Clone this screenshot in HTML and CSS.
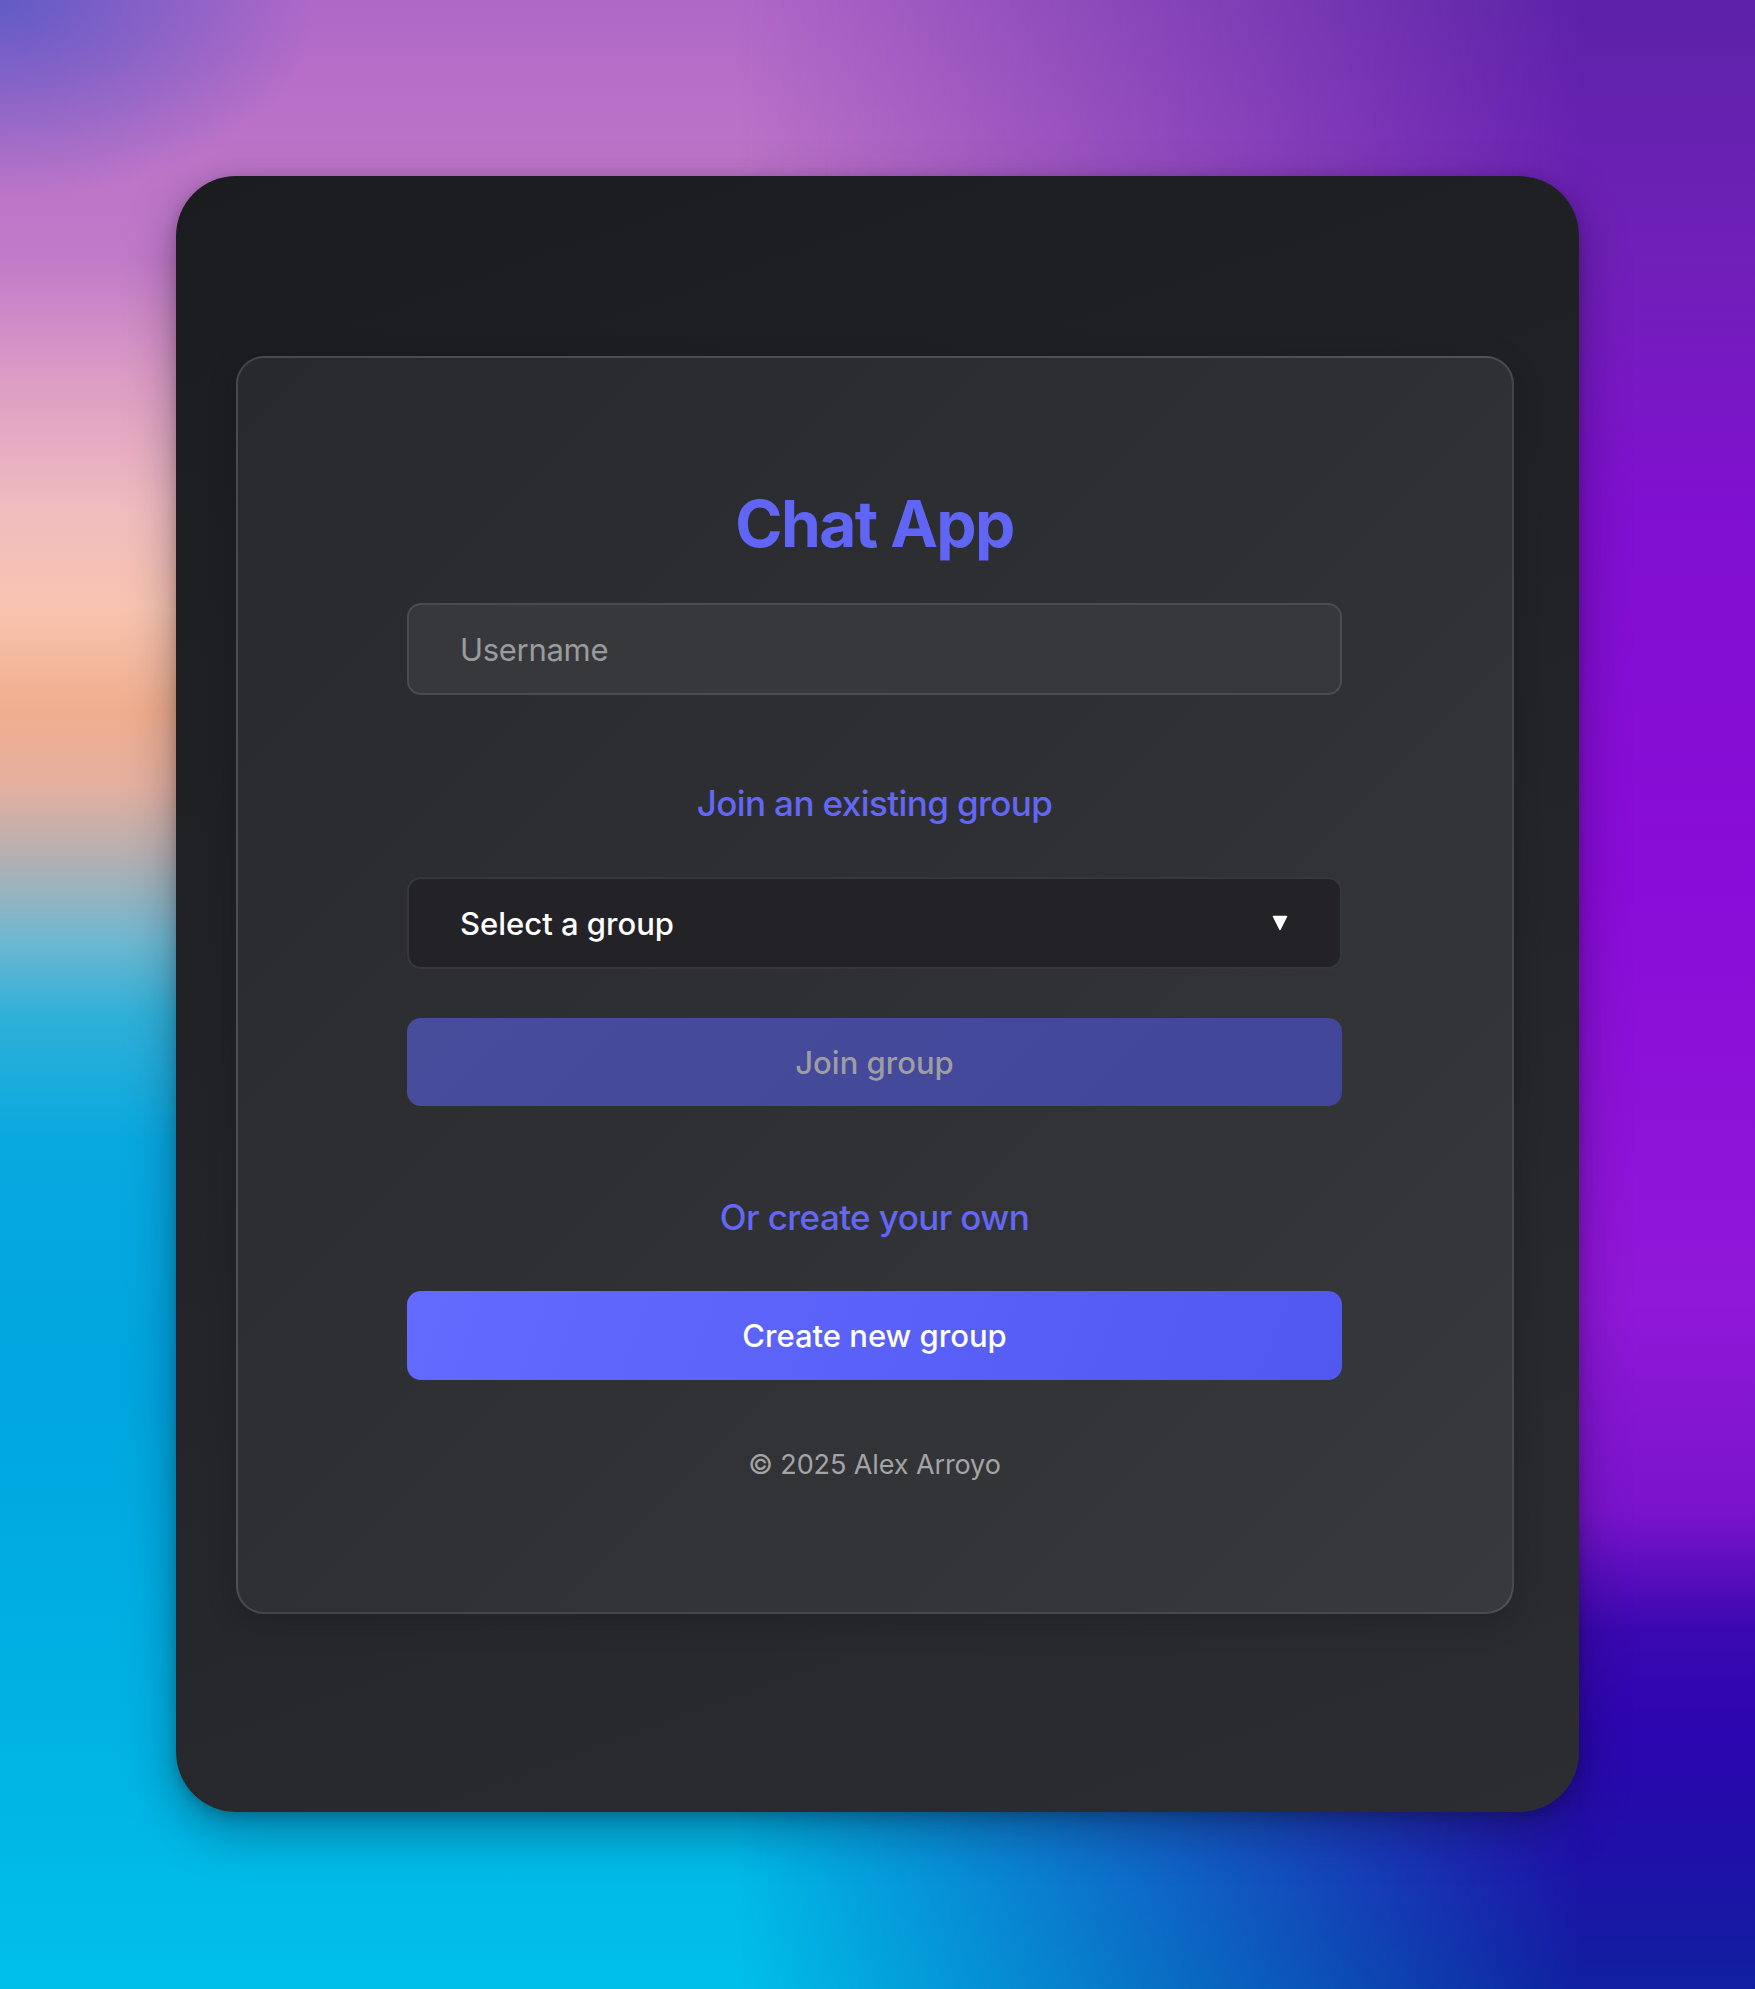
FILE: index.html
```html
<!DOCTYPE html>
<html lang="en">
<head>
<meta charset="utf-8">
<title>Chat App</title>
<link rel="stylesheet" href="styles.css">
</head>
<body>
  <div class="window">
    <main class="card">
      <h1 class="title">Chat App</h1>
      <input class="field" type="text" placeholder="Username">
      <h2 class="section-label">Join an existing group</h2>
      <div class="select">
        <span class="select-text">Select a group</span>
        <svg class="select-arrow" width="16" height="16" viewBox="0 0 16 16" aria-hidden="true">
          <path d="M1.5 1.5 H14.5 L8 14.5 Z" fill="#ffffff" stroke="#ffffff" stroke-width="1.5" stroke-linejoin="round"/>
        </svg>
      </div>
      <button class="btn btn-join" disabled>Join group</button>
      <h2 class="section-label section-label-2">Or create your own</h2>
      <button class="btn btn-create">Create new group</button>
      <footer class="footer">© 2025 Alex Arroyo</footer>
    </main>
  </div>
</body>
</html>
```

FILE: styles.css
```css
* { box-sizing: border-box; }

html, body { margin: 0; }

body {
  position: relative;
  min-height: 1989px;
  padding: 176px 176px 177px 176px;
  display: flex;
  font-family: Inter, "Noto Sans", "Liberation Sans", sans-serif;
  background:
    radial-gradient(ellipse 320px 200px at 0% 0%, rgba(84, 88, 198, 0.85) 0%, rgba(84, 88, 198, 0) 100%),
    linear-gradient(to bottom,
      #b068c8 0%, #bc74c8 8%, #c07ac8 13%, #dc9cc4 19%, #f0bcc0 25.5%,
      #f8c4b0 30.6%, #f0ae8e 35.7%, #e4b0a0 39.5%, #b0b0b4 43.4%,
      #70b8d0 47.2%, #30b0d8 51%, #08a8e0 57.4%, #00a6e0 70%,
      #00b4e4 89%, #00c0ea 100%);
  overflow: hidden;
}

body::before {
  content: "";
  position: absolute;
  inset: 0;
  background: linear-gradient(to bottom,
    #5c22a8 0%, #7020b8 12.8%, #8010d0 25.5%, #8a0cd8 44.6%,
    #9018d8 65.5%, #7a14cc 76%, #3a08b0 82%, #2c06b0 87%,
    #2010a8 93%, #1020a0 100%);
  -webkit-mask-image: linear-gradient(to right, transparent 42%, #000 90%);
  mask-image: linear-gradient(to right, transparent 42%, #000 90%);
  z-index: 0;
}

.window {
  position: relative;
  z-index: 1;
  flex: 1;
  display: flex;
  padding: 180px 65px 198px 60px;
  border-radius: 60px;
  background: linear-gradient(160deg, #1b1c1f 0%, #222327 45%, #2c2d31 100%);
  box-shadow: 0 18px 50px rgba(10, 10, 30, 0.35), 0 4px 14px rgba(0, 0, 0, 0.2);
}

.card {
  flex: 1;
  display: flex;
  flex-direction: column;
  align-items: stretch;
  padding: 127px 170px 129px 169px;
  border: 2px solid rgba(255, 255, 255, 0.13);
  border-radius: 28px;
  background: linear-gradient(135deg, #28292d 0%, #2f3034 50%, #38393d 100%);
  box-shadow: 0 8px 30px rgba(0, 0, 0, 0.18);
}

.title {
  margin: 0 0 41px;
  font-size: 64px;
  line-height: 77px;
  font-weight: 700;
  color: #6065f5;
  text-align: center;
  letter-spacing: -1.6px;
}

.field {
  display: block;
  width: 100%;
  height: 92px;
  margin: 0;
  padding: 0 52px 0 51px;
  border: 2px solid #4b4c50;
  border-radius: 14px;
  background: #37383c;
  font-family: inherit;
  font-size: 31px;
  font-weight: 400;
  letter-spacing: -0.3px;
  color: #ffffff;
  outline: none;
}

.field::placeholder {
  color: #9b9b9d;
}

.section-label {
  margin: 88px 0 54px;
  font-size: 35px;
  line-height: 40px;
  font-weight: 500;
  letter-spacing: -0.6px;
  color: #6367f3;
  text-align: center;
}

.section-label-2 {
  margin-top: 91px;
}

.select {
  display: flex;
  align-items: center;
  justify-content: space-between;
  height: 92px;
  padding: 0 52px 0 51px;
  border: 2px solid #36373b;
  border-radius: 14px;
  background: #232327;
}

.select-text {
  font-size: 31px;
  font-weight: 500;
  color: #ffffff;
}

.select-arrow {
  display: block;
  flex: none;
}

.btn {
  display: block;
  width: 100%;
  margin: 0;
  border: none;
  border-radius: 14px;
  font-family: inherit;
  font-size: 31px;
  font-weight: 500;
  text-align: center;
  padding: 0;
}

.btn-join {
  height: 88px;
  margin-top: 49px;
  background: linear-gradient(135deg, #474c9b 0%, #42469a 100%);
  color: #9e9ea2;
}

.btn-create {
  height: 89px;
  background: linear-gradient(110deg, #636afe 0%, #5a61f8 50%, #5158ef 100%);
  color: #ffffff;
}

.footer {
  margin-top: 67px;
  font-size: 27px;
  line-height: 36px;
  font-weight: 400;
  letter-spacing: -0.1px;
  color: #a4a4a6;
  text-align: center;
}
```
